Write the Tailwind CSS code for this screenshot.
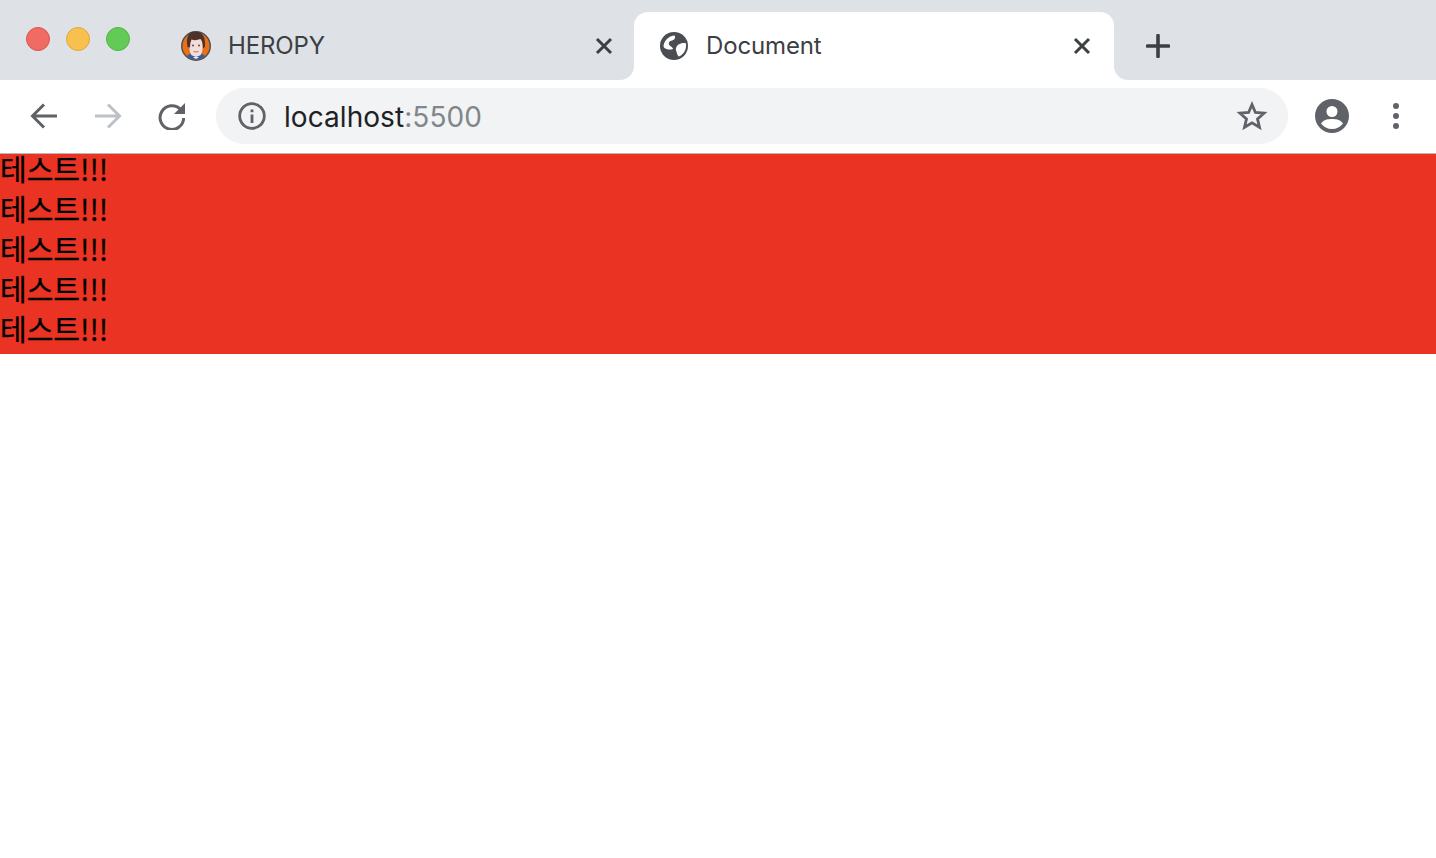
<!DOCTYPE html>
<html lang="ko">
<head>
    <meta charset="UTF-8">
    <meta name="viewport" content="width=device-width, initial-scale=1.0">
    <title>Document</title>
    <script src="https://cdn.jsdelivr.net/npm/@tailwindcss/browser@4"></script>
</head>
<body class="bg-white font-['Inter','Noto_Sans_CJK_KR',sans-serif]">
    <!-- tab strip -->
    <div class="flex h-[80px] bg-white">
        <div class="flex w-[634px] items-center rounded-br-[14px] bg-[#dee1e6]">
            <div class="mb-[2px] ml-[26px] flex gap-4">
                <span class="size-6 rounded-full border border-[#e0524a] bg-[#ef6b63]"></span>
                <span class="size-6 rounded-full border border-[#e0a63d] bg-[#f8c04e]"></span>
                <span class="size-6 rounded-full border border-[#52b344] bg-[#62cb55]"></span>
            </div>
            <div class="ml-[50px] mt-3 flex flex-1 items-center">
                <svg class="size-[32px]" viewBox="0 0 32 32">
                    <circle cx="16" cy="16" r="15" fill="#55504e"/>
                    <circle cx="16" cy="16" r="13.500" fill="#e8701a"/>
                    <path d="M7 26q3-3 5-3h8q2 0 5 3-4 3.500-9 3.500T7 26z" fill="#2f5ca3"/>
                    <path d="M9.500 12q0-5 6.500-5t6.500 5v7q0 7.500-6.500 7.500T9.500 19z" fill="#f4dcd8"/>
                    <path d="M13 27.500l3-1.500 3 1.500-3 1.500z" fill="#e9e4e2"/>
                    <path d="M7.500 17Q5 3 14 1.500q12-1 11 15.500l-2 1q0-6-2.500-9-5 2-9 .5-1.500 3-1.500 8z" fill="#4b322b"/>
                    <circle cx="13" cy="15.500" r=".9" fill="#444"/>
                    <circle cx="19" cy="15.500" r=".9" fill="#444"/>
                    <path d="M13.500 21.500q2.500 1 5 0" fill="none" stroke="#9a6a60" stroke-width=".9"/>
                </svg>
                <span class="ml-4 text-[24px] tracking-[-0.15px] text-[#3c4043]">HEROPY</span>
                <svg class="ml-auto mr-[20px] size-5" viewBox="0 0 20 20">
                    <path d="M3 3l14 14M17 3L3 17" stroke="#3c4043" stroke-width="3"/>
                </svg>
            </div>
        </div>
        <div class="w-[480px] bg-[#dee1e6] pt-3">
            <div class="flex h-[68px] items-center rounded-t-[14px] bg-white">
                <svg class="ml-[26px] size-7" viewBox="0 0 28 28">
                    <circle cx="14" cy="14" r="14" fill="#4a4d52"/>
                    <path d="M3.500 14C4 9 8 4.500 14 3.500c1.500 0 1.500 3 0 4-1.500 1.200-4 1-5 3-.7 1.500.5 3 2 4 1 .8 2 1.500 2 2.500-2.500 1-5 .5-6.500 0-1.500-.5-3-1.500-3-3z" fill="#fff"/>
                    <path d="M26 11.500c.5 3.500-.5 7-2.500 9.500-1.200 1.500-3 3-5 3.500-1.500-1.800-1.500-4-2.500-6-.6-2 .5-4.500 2.500-6 2-1.300 6-2 7.500-1z" fill="#fff"/>
                </svg>
                <span class="ml-[18px] text-[24px] tracking-[-0.15px] text-[#3c4043]">Document</span>
                <svg class="ml-auto mr-[22px] size-5" viewBox="0 0 20 20">
                    <path d="M3 3l14 14M17 3L3 17" stroke="#3c4043" stroke-width="3"/>
                </svg>
            </div>
        </div>
        <div class="flex flex-1 items-center rounded-bl-[14px] bg-[#dee1e6] pl-[32px] pt-3">
            <svg class="size-6" viewBox="0 0 24 24">
                <path d="M12 1.500v21M1.500 12h21" stroke="#3c4043" stroke-width="3.600" stroke-linecap="round"/>
            </svg>
        </div>
    </div>

    <!-- toolbar -->
    <div class="flex h-[74px] items-center border-b border-[#b8b8b8] pb-px pl-3 pr-2">
        <button class="flex h-14 w-16 items-center justify-center">
            <svg class="size-7" viewBox="0 0 28 28" fill="none" stroke="#5f6368" stroke-width="3">
                <path d="M27 14H3M14 2.500L2.500 14 14 25.500"/>
            </svg>
        </button>
        <button class="flex h-14 w-16 items-center justify-center">
            <svg class="size-7" viewBox="0 0 28 28" fill="none" stroke="#bdc1c6" stroke-width="3">
                <path d="M1 14h24M14 2.500L25.500 14 14 25.500"/>
            </svg>
        </button>
        <button class="flex h-14 w-16 items-center justify-center">
            <svg class="size-7" viewBox="0 0 28 28">
                <path d="M22.500 7.500A11.800 11.800 0 1 0 25.700 16" fill="none" stroke="#5f6368" stroke-width="3"/>
                <path d="M27 1v11H16z" fill="#5f6368"/>
            </svg>
        </button>
        <div class="ml-3 flex h-14 flex-1 items-center rounded-full bg-[#f1f3f4]">
            <svg class="ml-[22px] size-7" viewBox="0 0 28 28">
                <circle cx="14" cy="14" r="12.300" fill="none" stroke="#5f6368" stroke-width="2.800"/>
                <path d="M12.600 12.500h2.800V21h-2.800zM12.600 7.500h2.800v2.800h-2.800z" fill="#5f6368"/>
            </svg>
            <span class="ml-[18px] pt-px text-[28px] tracking-[0.06px] text-[#202124]">localhost<span class="text-[#80868b]">:5500</span></span>
            <svg class="ml-auto mr-[20px] size-8" viewBox="0 0 32 32">
                <path d="M16 4.500l3.400 8 8.600.7-6.500 5.700 2 8.400L16 22.800l-7.500 4.500 2-8.400L4 13.200l8.600-.7z" fill="none" stroke="#5f6368" stroke-width="2.800"/>
            </svg>
        </div>
        <button class="ml-3 flex h-14 w-16 items-center justify-center">
            <svg class="size-[34px]" viewBox="0 0 34 34">
                <circle cx="17" cy="17" r="17" fill="#5f6368"/>
                <circle cx="17" cy="12.500" r="5.500" fill="#fff"/>
                <path d="M6 24.500c3-4 7-4.500 11-4.500s8 .5 11 4.500c-2.500 3.500-6.500 5.500-11 5.500s-8.500-2-11-5.500z" fill="#fff"/>
            </svg>
        </button>
        <button class="flex h-14 w-16 flex-col items-center justify-center gap-1">
            <span class="size-[6px] rounded-full bg-[#5f6368]"></span>
            <span class="size-[6px] rounded-full bg-[#5f6368]"></span>
            <span class="size-[6px] rounded-full bg-[#5f6368]"></span>
        </button>
    </div>

    <!-- page content -->
    <div class="bg-[#ea3323] text-[29px] leading-[28px] text-black [-webkit-text-stroke:0.3px_black] font-['Noto_Sans_CJK_KR',sans-serif]">
        <div class="h-10">테스트!!!</div>
        <div class="h-10">테스트!!!</div>
        <div class="h-10">테스트!!!</div>
        <div class="h-10">테스트!!!</div>
        <div class="h-10">테스트!!!</div>
    </div>
</body>
</html>
